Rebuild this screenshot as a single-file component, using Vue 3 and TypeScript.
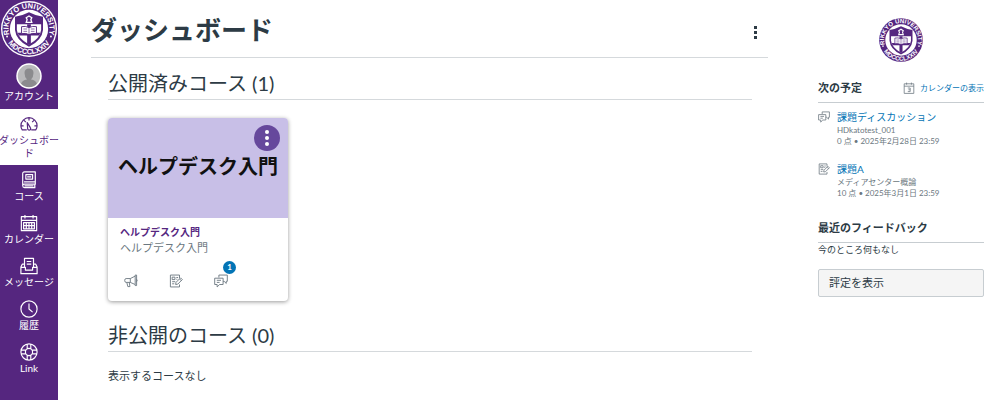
<script setup lang="ts">
interface NavItem {
  id: string
  label: string
  active?: boolean
}

interface Upcoming {
  icon: string
  title: string
  course: string
  due: string
}

const navItems: NavItem[] = [
  { id: 'gauge', label: 'ダッシュボード', active: true },
  { id: 'book', label: 'コース' },
  { id: 'calendar', label: 'カレンダー' },
  { id: 'inbox', label: 'メッセージ' },
  { id: 'clock', label: '履歴' },
  { id: 'link', label: 'Link' },
]

const cardActions = [
  { icon: 'megaphone', label: 'アナウンス', count: 0 },
  { icon: 'assignment', label: '課題', count: 0 },
  { icon: 'discussion', label: 'ディスカッション', count: 1 },
]

const upcoming: Upcoming[] = [
  { icon: 'discussion', title: '課題ディスカッション', course: 'HDkatotest_001', due: '0 点 • 2025年2月28日 23:59' },
  { icon: 'assignment', title: '課題A', course: 'メディアセンター概論', due: '10 点 • 2025年3月1日 23:59' },
]
</script>

<template>
  <div class="app" lang="ja">
    <svg class="defs" aria-hidden="true">
      <symbol id="seal" viewBox="0 0 60 60" overflow="visible">
        <path id="ring-top" d="M11 41 A22 22 0 1 1 49 41" fill="none" />
        <path id="ring-bottom" d="M3 30 A27 27 0 0 0 57 30" fill="none" />
        <circle cx="30" cy="30" r="30" fill="#fff" />
        <circle cx="30" cy="30" r="28.5" fill="#55267f" />
        <text class="seal-text"><textPath href="#ring-top" startOffset="50%" text-anchor="middle">RIKKYO UNIVERSITY</textPath></text>
        <text class="seal-text"><textPath href="#ring-bottom" startOffset="50%" text-anchor="middle">MDCCCLXXIV</textPath></text>
        <circle cx="6.5" cy="38" r="1" fill="#fff" />
        <circle cx="53.5" cy="38" r="1" fill="#fff" />
        <circle cx="30" cy="30" r="20.5" fill="#fff" />
        <path d="M15 17 Q22 16 30 12 Q38 16 45 17 V31 Q44 42 30 49 Q16 42 15 31Z" fill="#55267f" />
        <path d="M17 25 H43 V31 Q42 40 30 46.5 Q18 40 17 31Z" fill="#fff" />
        <path d="M28 25 H32 V46 L30 47 L28 46Z M18 34 H42 L41 37 H19Z" fill="#55267f" />
        <path d="M22 27.5 Q26 26.5 30 28.5 Q34 26.5 38 27.5 V35 Q34 34 30 36 Q26 34 22 35Z" fill="#fff" stroke="#55267f" />
        <path d="M30 28.5V36 M24 30H28 M24 32.5H28 M32 30H36 M32 32.5H36" stroke="#55267f" stroke-width=".7" />
        <path d="M27 18 L30 16 L33 18 L32 20 L33 23 H27 L28 20Z" fill="none" stroke="#fff" stroke-width="1.4" />
      </symbol>
      <symbol id="gauge" viewBox="0 0 20 20">
        <path d="M7.5 16.5H2.5Q1 14.5 1 12A9 9 0 0 1 19 12Q19 14.5 17.5 16.5H12.5 M10 3V6 M4.5 6L6.5 8 M1.500 12H4 M16 12H18.500 M15.500 6L13.500 8 M8.500 15L8 8.500L11.500 14A1.700 1.700 0 1 1 8.500 15Z" />
      </symbol>
      <symbol id="book" viewBox="0 0 20 20">
        <path d="M5 1H17V14.5H5Q3 14.5 3 16.5V3Q3 1 5 1Z M3 16.5Q3 18.5 5 18.5H17 M17 14.5Q15.5 16.5 17 18.5 M5 16.5H15 M6.5 4H14V9H6.5Z M8 6.5H12.5 M4.5 12H17" />
      </symbol>
      <symbol id="calendar" viewBox="0 0 20 20">
        <path d="M1.5 3H18.5V18.5H1.5Z M1.5 7H18.5 M5.5 1V5 M14.5 1V5 M4 9.5H16V16.5H4Z M4 13H16 M7 9.5V16.5 M10 9.5V16.5 M13 9.5V16.5" />
      </symbol>
      <symbol id="inbox" viewBox="0 0 20 20">
        <path d="M5 11V1.500H15V11 M7.500 5H12.500 M7.500 8H12.500 M5 8H2.500L1 11V18.500H19V11L17.500 8H15 M1 11.500H6V14.500H14V11.500H19" />
      </symbol>
      <symbol id="clock" viewBox="0 0 20 20">
        <path d="M19 10A9 9 0 1 1 1 10A9 9 0 0 1 19 10Z M10 4V10L14 13.5" />
      </symbol>
      <symbol id="link" viewBox="0 0 20 20">
        <path d="M19 10A9 9 0 1 1 1 10A9 9 0 0 1 19 10Z M14 10A4 4 0 1 1 6 10A4 4 0 0 1 14 10Z M8 1.500V6.500 M12 1.500V6.500 M8 13.500V18.500 M12 13.500V18.500 M1.500 8H6.500 M1.500 12H6.500 M13.500 8H18.500 M13.500 12H18.500" />
      </symbol>
      <symbol id="megaphone" viewBox="0 0 20 20">
        <path d="M3 6.5H9L16 3V15L9 12H3Q1 12 1 9.25T3 6.5Z M9 6.5V12 M16 3V1.5H18V16.5H16V15 M4 12L5.5 18H8.5L7.5 12 M18 7.5Q19.5 9 18 11" />
      </symbol>
      <symbol id="assignment" viewBox="0 0 20 20">
        <path d="M15 6V1.5H2V18.5H15V15 M4.5 4.5H8.5V8H4.5Z M10.5 5H13 M10.5 7.5H12 M4.5 11H9 M4.5 14H7.5 M9.5 15L10 12L16.5 5.5L19 8L12.5 14.5Z M15 7L17.5 9.5" />
      </symbol>
      <symbol id="discussion" viewBox="0 0 20 20">
        <path d="M7 5V1.5H19V10.5H17.5V13.5L14.5 10.5H13 M1 6H13V15H8L4.5 18.5V15H1Z M4 9H10 M4 12H8" />
      </symbol>
      <symbol id="calendar-day" viewBox="0 0 20 20">
        <path d="M2 3H18V19H2Z M2 7H18 M6 1V4.5 M14 1V4.5 M8 10H12V16H8 M9 13H12" />
      </symbol>
    </svg>

    <nav class="sidebar" aria-label="グローバルナビゲーション">
      <a class="brand" href="#" aria-label="Rikkyo University">
        <svg viewBox="0 0 60 60"><use href="#seal" /></svg>
      </a>
      <a class="nav-item account" href="#">
        <svg class="avatar" viewBox="0 0 26 26" aria-hidden="true">
          <circle cx="13" cy="13" r="12" fill="#b9b9bb" />
          <path d="M5 21Q6 17 11 16.5Q8.5 14 8.5 10Q8.5 5.5 13 5.5T17.5 10Q17.5 14 15 16.5Q20 17 21 21Q13 28 5 21Z" fill="#8b8b8e" />
          <circle cx="13" cy="13" r="12" fill="none" stroke="#fff" stroke-width="1.5" />
        </svg>
        <span>アカウント</span>
      </a>
      <a v-for="item in navItems" :key="item.id" class="nav-item" :class="{ active: item.active }" href="#">
        <svg class="icon nav-icon" aria-hidden="true"><use :href="'#' + item.id" /></svg>
        <span>{{ item.label }}</span>
      </a>
    </nav>

    <main class="main">
      <header class="page-head">
        <h1>ダッシュボード</h1>
        <button class="page-menu" type="button" aria-label="ダッシュボードのオプション">
          <svg viewBox="0 0 3 13" aria-hidden="true"><path d="M0 0H3V3H0Z M0 5H3V8H0Z M0 10H3V13H0Z" /></svg>
        </button>
      </header>

      <div class="courses">
        <h2>公開済みコース (1)</h2>
        <article class="card">
          <div class="hero">
            <strong>ヘルプデスク入門</strong>
            <button class="card-menu" type="button" aria-label="コースのオプション">
              <svg viewBox="0 0 4 16" aria-hidden="true">
                <circle cx="2" cy="2" r="2" /><circle cx="2" cy="8" r="2" /><circle cx="2" cy="14" r="2" />
              </svg>
            </button>
          </div>
          <div class="card-body">
            <a class="card-title" href="#">ヘルプデスク入門</a>
            <p>ヘルプデスク入門</p>
            <div class="actions">
              <a v-for="action in cardActions" :key="action.icon" href="#" :aria-label="action.label">
                <svg class="icon" aria-hidden="true"><use :href="'#' + action.icon" /></svg>
                <span v-if="action.count" class="badge">{{ action.count }}</span>
              </a>
            </div>
          </div>
        </article>

        <h2>非公開のコース (0)</h2>
        <p class="empty">表示するコースなし</p>
      </div>
    </main>

    <aside class="aside">
      <svg class="aside-logo" viewBox="0 0 60 60" role="img" aria-label="Rikkyo University"><use href="#seal" /></svg>
      <section>
        <div class="aside-head">
          <h3>次の予定</h3>
          <a class="calendar-link" href="#">
            <svg class="icon" aria-hidden="true"><use href="#calendar-day" /></svg>カレンダーの表示
          </a>
        </div>
        <ul class="events">
          <li v-for="event in upcoming" :key="event.title">
            <svg class="icon" aria-hidden="true"><use :href="'#' + event.icon" /></svg>
            <div>
              <a href="#">{{ event.title }}</a>
              <p>{{ event.course }}</p>
              <p>{{ event.due }}</p>
            </div>
          </li>
        </ul>
      </section>
      <section>
        <div class="aside-head">
          <h3>最近のフィードバック</h3>
        </div>
        <p class="nothing">今のところ何もなし</p>
      </section>
      <button class="grades" type="button">評定を表示</button>
    </aside>
  </div>
</template>

<style>
body {
  background: #fff;
}
</style>

<style scoped>
.app {
  display: flex;
  min-height: 100vh;
  font-family: Lato, "Noto Sans CJK JP", sans-serif;
  font-size: 11px;
  color: #2d3b45;
}
h1, h2, h3, p, ul {
  margin: 0;
  padding: 0;
}
a {
  color: #0374b5;
  text-decoration: none;
}
button {
  font-family: inherit;
  cursor: pointer;
}
.defs {
  position: absolute;
  width: 0;
  height: 0;
}
.seal-text {
  font-family: "Liberation Sans", sans-serif;
  font-size: 8px;
  font-weight: 700;
  fill: #fff;
}
.icon {
  flex: none;
  width: 12px;
  height: 12px;
  fill: none;
  stroke: currentColor;
  stroke-width: 1.3;
  stroke-linejoin: round;
}

.sidebar {
  flex: none;
  width: 58px;
  background: #55267f;
}
.brand {
  display: flex;
  justify-content: center;
  padding: 1px 1px 0;
}
.brand svg {
  width: 56px;
  height: 56px;
  overflow: visible;
}
.nav-item {
  display: flex;
  flex-direction: column;
  align-items: center;
  gap: 1px;
  padding: 6px 0 5px;
  font-size: 10px;
  line-height: 13px;
  text-align: center;
  color: #fff;
}
.nav-item span {
  max-width: 60px;
  margin: 0 -1px;
  word-break: break-all;
}
.nav-item.active {
  background: #fff;
  color: #55267f;
}
.nav-icon {
  width: 18px;
  height: 18px;
}
.account {
  padding-bottom: 6px;
}
.avatar {
  width: 26px;
  height: 26px;
}

.main {
  flex: 1;
  min-width: 0;
  padding: 0 32px 12px 33px;
}
.page-head {
  display: flex;
  align-items: center;
  justify-content: space-between;
  height: 57px;
  padding-right: 8px;
  border-bottom: 1px solid #d5d9dc;
}
h1 {
  margin-top: 3px;
  font-size: 26px;
  line-height: 32px;
  font-weight: 700;
}
.page-menu {
  width: 10px;
  height: 24px;
  margin-top: 8px;
  padding: 0;
  border: 0;
  background: none;
}
.page-menu svg {
  display: block;
  width: 3px;
  height: 13px;
  margin: auto;
  fill: #2d3b45;
}
.courses {
  padding: 12px 16px 0 17px;
}
h2 {
  padding-bottom: 2px;
  border-bottom: 1px solid #d5d9dc;
  font-size: 20px;
  line-height: 27px;
  font-weight: 400;
}
.card {
  width: 180px;
  margin: 18px 0 21px;
  border-radius: 4px;
  background: #fff;
  box-shadow: 0 1px 4px rgba(0, 0, 0, 0.4);
}
.hero {
  position: relative;
  display: flex;
  align-items: center;
  justify-content: center;
  height: 100px;
  padding-bottom: 0;
  border-radius: 4px 4px 0 0;
  background: #c8bfe7;
  font-size: 20px;
  line-height: 28px;
  color: #111;
}
.hero strong {
  padding-bottom: 4px;
  white-space: nowrap;
}
.card-menu {
  position: absolute;
  top: 7px;
  right: 8px;
  display: flex;
  align-items: center;
  justify-content: center;
  width: 26px;
  height: 26px;
  padding: 0;
  border: 0;
  border-radius: 50%;
  background: #66489c;
}
.card-menu svg {
  width: 4px;
  height: 16px;
  fill: #fff;
}
.card-body {
  padding: 6px 12px 13px;
}
.card-title {
  display: block;
  font-size: 10px;
  line-height: 16px;
  font-weight: 700;
  color: #55267f;
}
.card-body p {
  line-height: 16px;
  color: #6b7780;
}
.actions {
  display: flex;
  gap: 31px;
  padding: 18px 4px 0;
}
.actions a {
  position: relative;
  display: flex;
  color: #6b7780;
}
.actions .icon {
  width: 14px;
  height: 14px;
}
.badge {
  position: absolute;
  top: -13px;
  left: 9px;
  width: 13px;
  border-radius: 7px;
  background: #0374b5;
  font-size: 8px;
  line-height: 13px;
  font-weight: 700;
  text-align: center;
  color: #fff;
}
.empty {
  margin-top: 16px;
  line-height: 16px;
}

.aside {
  display: flex;
  flex-direction: column;
  flex: none;
  width: 166px;
  padding: 17px 16px 0 18px;
}
.aside-logo {
  align-self: center;
  width: 46px;
  height: 46px;
  overflow: visible;
}
.aside section {
  margin-top: 16px;
}
.aside-head {
  display: flex;
  align-items: center;
  justify-content: space-between;
  padding-bottom: 5px;
  border-bottom: 1px solid #c7cdd1;
}
h3 {
  font-size: 11px;
  line-height: 18px;
  font-weight: 700;
}
.calendar-link {
  display: flex;
  align-items: center;
  gap: 5px;
  font-size: 8px;
  line-height: 16px;
}
.calendar-link .icon {
  color: #6b7780;
}
.events {
  list-style: none;
}
.events li {
  display: flex;
  gap: 7px;
  padding: 6px 0 8px;
  color: #6b7780;
}
.events .icon {
  margin-top: 2px;
}
.events a {
  display: block;
  font-size: 10px;
  line-height: 16px;
}
.events p {
  font-size: 8px;
  line-height: 11px;
  white-space: nowrap;
}
.aside section + section {
  margin-top: 12px;
}
.nothing {
  font-size: 9px;
  line-height: 13px;
}
.grades {
  margin-top: 13px;
  padding: 0 10px;
  border: 1px solid #c7cdd1;
  border-radius: 2px;
  background: #f5f5f5;
  font-size: 11px;
  line-height: 26px;
  text-align: left;
  color: #2d3b45;
}
</style>
